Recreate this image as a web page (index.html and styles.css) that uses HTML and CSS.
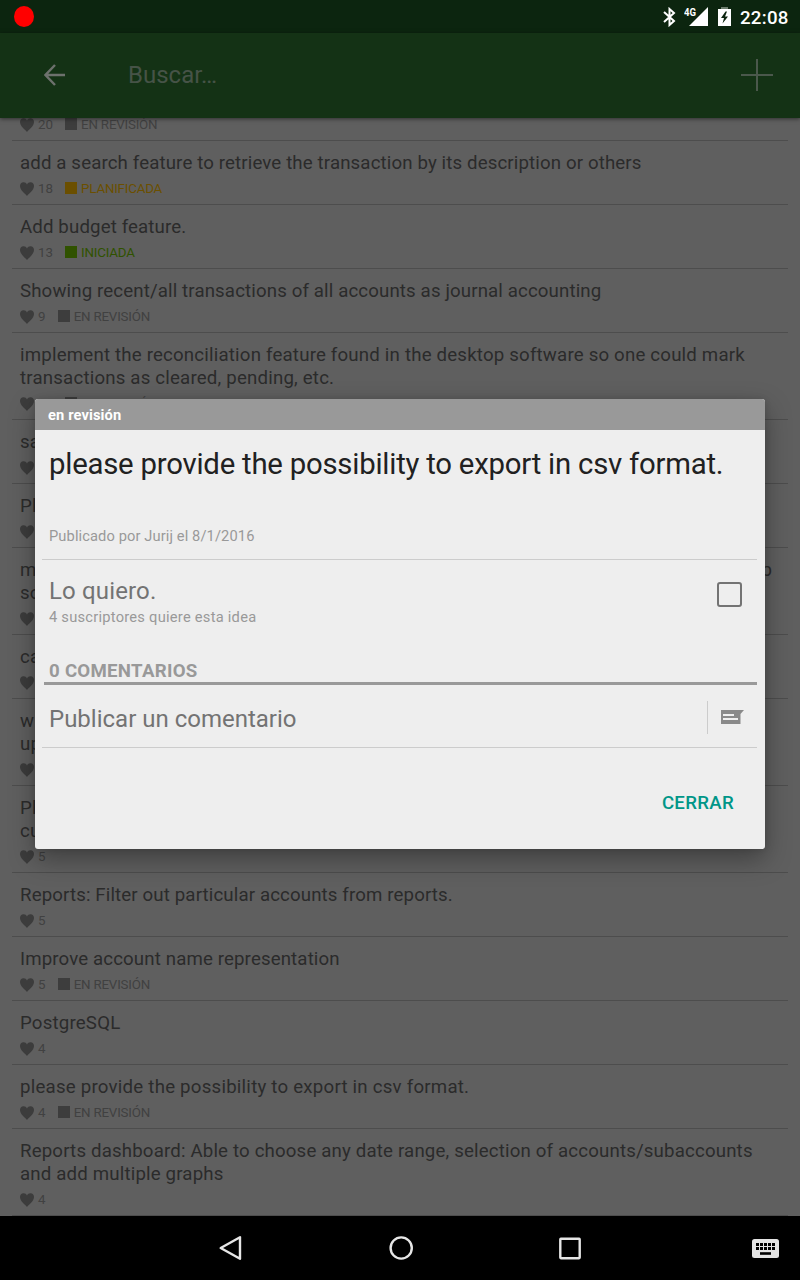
FILE: index.html
```html
<!DOCTYPE html>
<html lang="es">
<head>
<meta charset="utf-8">
<title>Ideas</title>
<link rel="stylesheet" href="styles.css">
</head>
<body>
<svg class="defs" width="0" height="0"><symbol id="heart" viewBox="0 0 14 14"><path d="M7 14C5.300 11.900 0 8.200 0 4.100 0 1.700 1.500.2 3.500.2 5.200.2 6.300 1.100 7 2.500 7.700 1.100 8.800.2 10.500.2 12.500.2 14 1.700 14 4.100 14 8.200 8.700 11.900 7 14Z"/></symbol></svg>
<div class="screen">
  <header class="status">
    <span class="record"></span>
    <div class="status-icons">
      <svg class="bluetooth" width="13" height="20" viewBox="0 0 13 20"><path d="M1 5 11 14 6.500 18V2L11 6 1 15" fill="none" stroke="#fff" stroke-width="2"/></svg>
      <svg class="signal" width="24" height="20" viewBox="0 0 24 20"><path d="M24 0V19H5Z" fill="#fff"/><text x="0" y="8.500" class="net" textLength="12" lengthAdjust="spacingAndGlyphs">4G</text></svg>
      <svg class="battery" width="13" height="20" viewBox="0 0 13 20"><path d="M3 0h7v3H3z" fill="#6d7e6e"/><path d="M0 2h13v17H0z" fill="#fff"/><path d="M7.500 4.500 3 11h3l-1.500 5.500L10 9.500H7L9 4.500Z" fill="#0c250f"/></svg>
      <span class="clock">22:08</span>
    </div>
  </header>
  <nav class="toolbar">
    <svg class="back" width="22" height="22" viewBox="0 0 22 22"><path d="M21 11H2M11 1 1.500 11 11 21" fill="none" stroke="#6d716d" stroke-width="2.400"/></svg>
    <span class="search">Buscar…</span>
    <svg class="plus" width="32" height="32" viewBox="0 0 32 32"><path d="M0 16H32M16 0V32" stroke="#4b584c" stroke-width="2"/></svg>
  </nav>
  <main class="list">
    <article class="row first"><p class="meta"><svg class="heart"><use href="#heart"/></svg><b>20</b><i></i><em>EN REVISIÓN</em></p></article>
    <article class="row"><h2>add a search feature to retrieve the transaction by its description or others</h2><p class="meta"><svg class="heart"><use href="#heart"/></svg><b>18</b><i class="planned"></i><em class="planned-text">PLANIFICADA</em></p></article>
    <article class="row"><h2>Add budget feature.</h2><p class="meta"><svg class="heart"><use href="#heart"/></svg><b>13</b><i class="started"></i><em class="started-text">INICIADA</em></p></article>
    <article class="row"><h2>Showing recent/all transactions of all accounts as journal accounting</h2><p class="meta"><svg class="heart"><use href="#heart"/></svg><b>9</b><i></i><em>EN REVISIÓN</em></p></article>
    <article class="row"><h2 class="loose">implement the reconciliation feature found in the desktop software so one could mark<br>transactions as cleared, pending, etc.</h2><p class="meta"><svg class="heart"><use href="#heart"/></svg><b>11</b><i></i><em>EN REVISIÓN</em></p></article>
    <article class="row"><h2>sa</h2><p class="meta"><svg class="heart"><use href="#heart"/></svg></p></article>
    <article class="row"><h2>Pl</h2><p class="meta"><svg class="heart"><use href="#heart"/></svg></p></article>
    <article class="row"><h2><span class="split wide"><span>m</span><span>p</span></span>so</h2><p class="meta"><svg class="heart"><use href="#heart"/></svg></p></article>
    <article class="row"><h2>ca</h2><p class="meta"><svg class="heart"><use href="#heart"/></svg></p></article>
    <article class="row"><h2><span class="split"><span>w</span><span>d</span></span>up</h2><p class="meta"><svg class="heart"><use href="#heart"/></svg></p></article>
    <article class="row"><h2>Pl<br>cu</h2><p class="meta"><svg class="heart"><use href="#heart"/></svg><b>5</b></p></article>
    <article class="row"><h2>Reports: Filter out particular accounts from reports.</h2><p class="meta"><svg class="heart"><use href="#heart"/></svg><b>5</b></p></article>
    <article class="row"><h2>Improve account name representation</h2><p class="meta"><svg class="heart"><use href="#heart"/></svg><b>5</b><i></i><em>EN REVISIÓN</em></p></article>
    <article class="row"><h2 class="loose">PostgreSQL</h2><p class="meta"><svg class="heart"><use href="#heart"/></svg><b>4</b></p></article>
    <article class="row"><h2 class="looser">please provide the possibility to export in csv format.</h2><p class="meta"><svg class="heart"><use href="#heart"/></svg><b>4</b><i></i><em>EN REVISIÓN</em></p></article>
    <article class="row"><h2 class="snug">Reports dashboard: Able to choose any date range, selection of accounts/subaccounts<br>and add multiple graphs</h2><p class="meta"><svg class="heart"><use href="#heart"/></svg><b>4</b></p></article>
  </main>
  <footer class="navbar">
    <svg width="24" height="26" viewBox="0 0 24 26"><path d="M21 2.200V23.800L1.700 13Z" fill="none" stroke="#e6e6e6" stroke-width="2.400" stroke-linejoin="round"/></svg>
    <svg width="24" height="26" viewBox="0 0 24 26"><circle cx="12.200" cy="13" r="10.600" fill="none" stroke="#e6e6e6" stroke-width="2.400"/></svg>
    <svg width="24" height="26" viewBox="0 0 24 26"><rect x="2.300" y="3.800" width="19.400" height="19.400" rx=".6" fill="none" stroke="#e6e6e6" stroke-width="2.400"/></svg>
    <svg class="keyboard" width="27" height="19" viewBox="0 0 27 19"><rect width="27" height="19" rx="2.500" fill="#e4e4e4"/><path d="M4 5.500H23M4 9.500H23" stroke="#000" stroke-width="2.800" stroke-dasharray="3 1"/><path d="M8 14.500H19" stroke="#000" stroke-width="2.600"/></svg>
  </footer>
</div>
<section class="dialog">
  <div class="tag">en revisión</div>
  <h1>please provide the possibility to export in csv format.</h1>
  <p class="author">Publicado por Jurij el 8/1/2016</p>
  <div class="want">
    <div><p class="big like">Lo quiero.</p><p class="small">4 suscriptores quiere esta idea</p></div>
    <span class="check"></span>
  </div>
  <h3>0 COMENTARIOS</h3>
  <div class="post">
    <span class="big">Publicar un comentario</span>
    <span class="send"><svg width="24" height="15" viewBox="0 0 24 15"><path d="M0 0H23L19.500 4V14H0Z" fill="#898989"/><path d="M2 5H13M2 9H17" stroke="#eee" stroke-width="1.800"/></svg></span>
  </div>
  <div class="actions"><span>CERRAR</span></div>
</section>
</body>
</html>
```
FILE: styles.css
```css
* { box-sizing: border-box; }
body { margin: 0; font-family: Roboto, sans-serif; overflow: hidden; }
h1, h2, h3, p { margin: 0; font-weight: 400; }
.defs { position: absolute; }
.screen { width: 800px; height: 1280px; display: flex; flex-direction: column; background: #5f5f5f; }

.status { height: 33px; flex: none; display: flex; align-items: center; justify-content: space-between; padding: 0 11px 0 14px; background: #0c250f; }
.record { width: 20px; height: 21px; border-radius: 50%; background: #f00; }
.status-icons { display: flex; align-items: center; }
.bluetooth { margin-right: 8px; }
.signal { margin-right: 10px; }
.battery { margin-right: 9px; }
.net { font: 700 10px Roboto, sans-serif; fill: #fff; }
.clock { width: 49px; color: #fff; font-size: 18.700px; font-weight: 500; line-height: 22px; letter-spacing: .25px; white-space: nowrap; padding-top: 2px; }

.toolbar { position: relative; z-index: 1; height: 85px; flex: none; display: flex; align-items: center; padding: 0 27px 2px 44px; background: #143215; box-shadow: 0 1px 4px rgba(0, 0, 0, .5); }
.search { margin-left: 62px; flex: 1; font-size: 24px; color: #465347; }

.list { flex: 1; padding: 0 12px; overflow: hidden; }
.row { padding: 11px 8px 0; height: 64px; border-bottom: 1px solid #4d4d4d; }
.row:has(br), .row:has(.split) { height: 87px; }
.row.first { display: flex; height: 23px; padding-top: 0; }
.row h2 { font-size: 18.670px; line-height: 23px; color: #2b2b2b; letter-spacing: .13px; white-space: nowrap; }
.row h2.snug { letter-spacing: .165px; }
.row h2.loose { letter-spacing: .19px; }
.row h2.looser { letter-spacing: .225px; }
.split { display: flex; justify-content: space-between; width: 746px; }
.split.wide { width: 752px; }
.meta { display: flex; align-items: center; height: 16px; margin-top: 6px; font-size: 13.330px; line-height: 16px; color: #414141; }
.row.first .meta { margin-top: -1px; }
.heart { width: 14px; height: 14px; fill: #3c3c3c; margin-right: 4px; }
.meta b { font-weight: 400; letter-spacing: -.1px; }
.meta i { width: 12px; height: 12px; margin: 0 4px 2px 12.300px; background: #3d3d3d; }
.meta em { font-style: normal; letter-spacing: -.2px; }
.meta i.planned { background: #6b4f00; }
.meta em.planned-text { color: #6b4f00; }
.meta i.started { background: #305200; }
.meta em.started-text { color: #305200; }

.navbar { height: 64px; flex: none; background: #000; display: grid; grid-template-columns: 24px 24px 24px; column-gap: 145.500px; padding: 19px 0 0 219px; position: relative; }
.keyboard { position: absolute; left: 752px; top: 23px; }

.dialog { position: absolute; z-index: 2; left: 35px; top: 399px; width: 730px; height: 450px; background: #eee; border-radius: 3px; box-shadow: 0 10px 26px rgba(0, 0, 0, .34), 0 0 6px rgba(0, 0, 0, .12); display: flex; flex-direction: column; }
.tag { height: 31px; padding-left: 13px; border-radius: 3px 3px 0 0; background: #999; color: #fff; font-size: 14.670px; font-weight: 700; line-height: 33px; letter-spacing: .12px; }
.dialog h1 { padding: 17px 14px 0; height: 94px; font-size: 29.330px; line-height: 34px; letter-spacing: -.225px; color: #212121; white-space: nowrap; }
.author { height: 36px; margin: 0 8px 0 7px; padding: 3px 0 0 7px; border-bottom: 1px solid #ccc; font-size: 14.670px; line-height: 18px; letter-spacing: .11px; color: #999; }
.want { display: flex; justify-content: space-between; height: 100px; padding: 16px 23px 0 14px; }
.big { font-size: 24px; line-height: 30px; color: #737373; }
.like { letter-spacing: .15px; }
.small { font-size: 14.670px; line-height: 18px; letter-spacing: .25px; color: #999; margin-top: 2px; }
.check { width: 25px; height: 25px; margin-top: 6px; border: 2.500px solid #737373; border-radius: 3px; }
.dialog h3 { height: 25px; margin: 0 8px 0 9px; padding-left: 5px; border-bottom: 3px solid #999; font-size: 18.670px; line-height: 22px; font-weight: 700; letter-spacing: .27px; color: #999; }
.post { height: 63px; margin: 0 8px 0 7px; padding: 16px 14px 0 7px; border-bottom: 1px solid #ccc; display: flex; justify-content: space-between; }
.post .big { margin-top: 3px; }
.send { height: 33px; width: 36px; padding: 9px 0 0 13px; border-left: 1px solid #ccc; }
.send svg { display: block; }
.actions { display: flex; justify-content: flex-end; padding: 43px 31px 0 0; font-size: 18.670px; line-height: 24px; font-weight: 500; letter-spacing: .3px; color: #009688; }
```
